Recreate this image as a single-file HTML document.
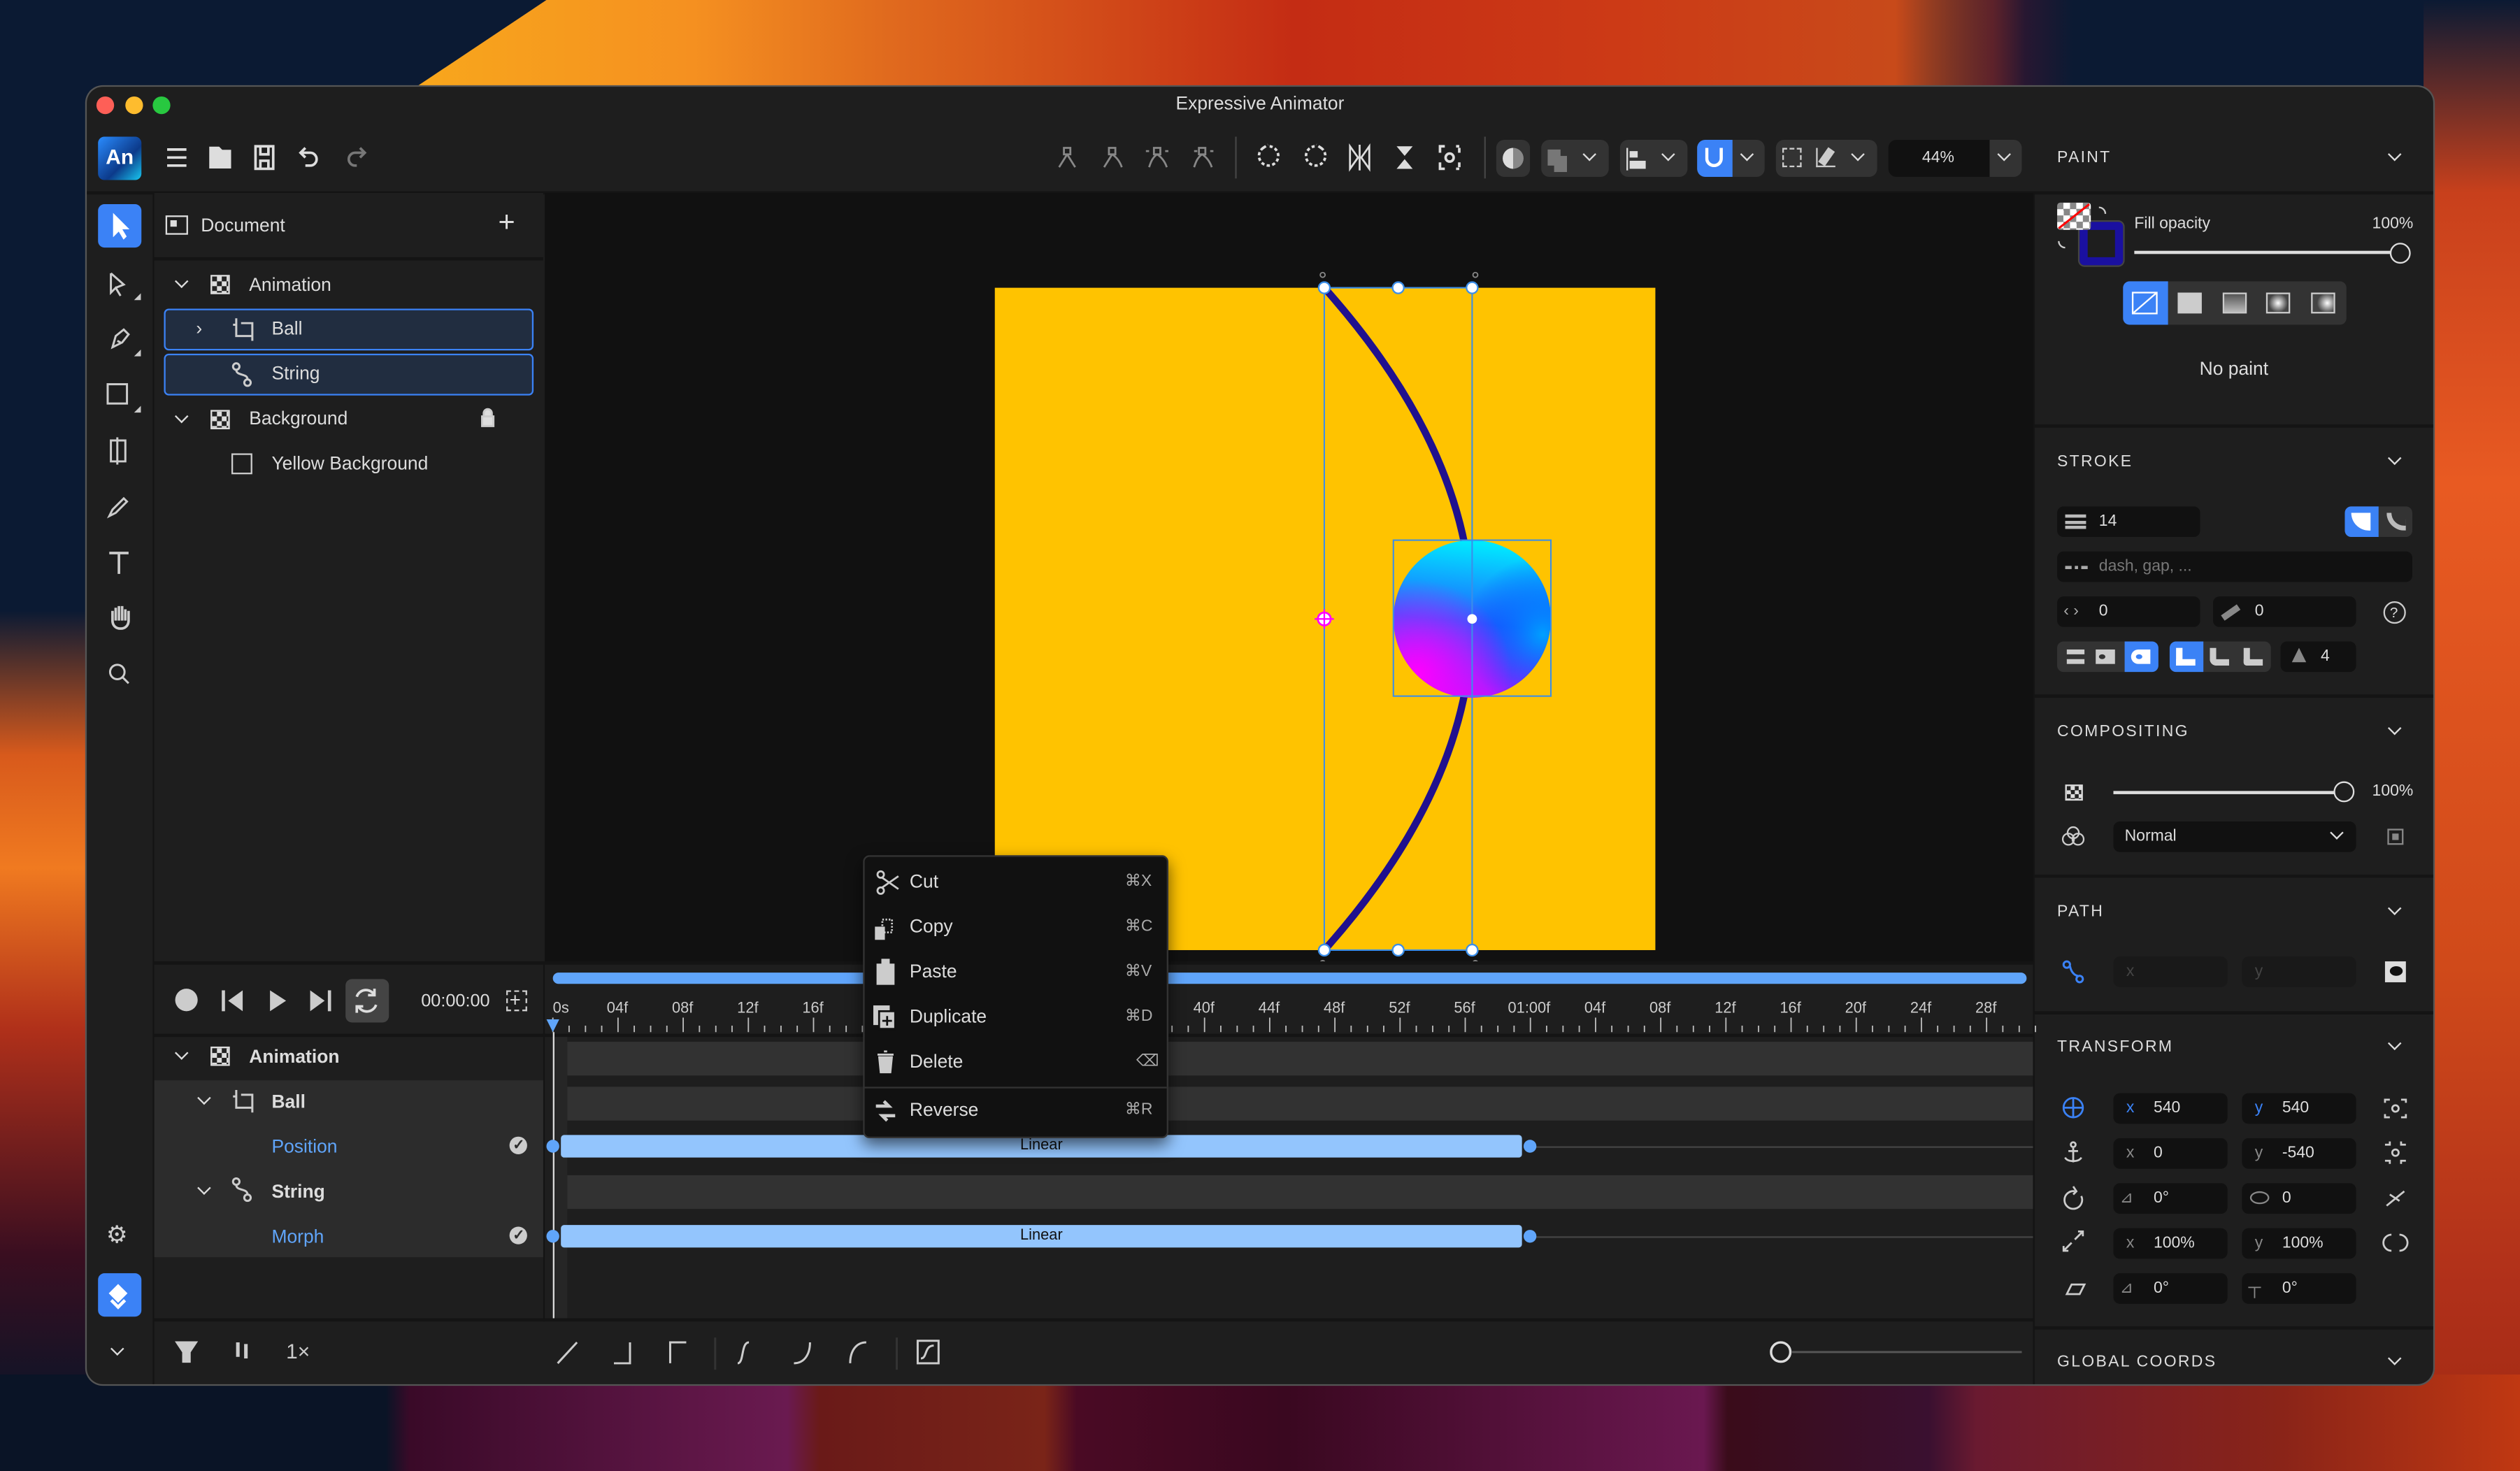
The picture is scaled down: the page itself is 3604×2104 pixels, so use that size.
<!DOCTYPE html>
<html><head><meta charset="utf-8"><style>
*{margin:0;padding:0;box-sizing:border-box}
html,body{width:3604px;height:2104px;overflow:hidden;background:#0b1a33}
#s{position:absolute;left:0;top:0;width:1568px;height:915px;transform:scale(2.29847,2.29945);transform-origin:0 0;font-family:"Liberation Sans",sans-serif;color:#ddd;overflow:hidden}
.a{position:absolute}
.t{position:absolute;font-size:11.5px;white-space:nowrap;line-height:14px}
.h{position:absolute;font-size:10px;letter-spacing:1px;color:#ddd;white-space:nowrap}
.chev{position:absolute;width:7px;height:7px;border-right:1.6px solid #ddd;border-bottom:1.6px solid #ddd;transform:rotate(45deg)}
.inp{position:absolute;background:#111;border-radius:4px;height:19px}
.sep{position:absolute;height:2px;background:#141414}
svg{position:absolute;overflow:visible}
</style></head><body><div id="s">
<!-- wallpaper -->
<div class="a" style="left:0;top:0;width:1568px;height:915px;background:#0b1a33"></div>
<div class="a" style="left:0;top:0;width:1568px;height:60px;background:linear-gradient(90deg,#0b1a33 0,#0b1a33 1200px,#3a1530 1240px,#0b1a33 1290px,#0b1a33 1535px,#e05a30 1560px)"></div>
<div class="a" style="left:250px;top:0;width:1010px;height:60px;clip-path:polygon(90px 0,100% 0,100% 100%,0 100%);background:linear-gradient(90deg,#f8a81c 0%,#f59020 18%,#e06a1e 30%,#c42c14 55%,#cc3a16 75%,#c84a1a 92%,rgba(60,20,40,0) 100%)"></div>
<div class="a" style="left:0;top:0;width:60px;height:915px;background:linear-gradient(180deg,#0b1a33 0,#0b1a33 380px,#d85a1c 470px,#f07a20 540px,#b0301a 640px,#3a0e20 780px,#0a1528 880px)"></div>
<div class="a" style="left:1508px;top:0;width:60px;height:915px;background:linear-gradient(180deg,#0b1a33 0,#c8401c 120px,#e85a22 300px,#d04a1a 600px,#b0301a 800px,#a02a12 915px)"></div>
<div class="a" style="left:0;top:855px;width:1568px;height:60px;background:linear-gradient(90deg,#0a1426 0,#0a1426 240px,#3a0a28 255px,#6a1a50 490px,#6a1a18 510px,#7a2418 650px,#4a0a24 670px,#3a0820 800px,#6a1850 1060px,#3a0c1a 1075px,#3a1030 1200px,#6a1a30 1230px,#8a2418 1420px,#c03812 1568px)"></div>

<!-- window -->
<div class="a" style="left:54px;top:54px;width:1460px;height:807px;background:#1e1e1e;border-radius:10px;overflow:hidden;box-shadow:0 0 0 1px #555">
<div class="a" style="left:0;top:65px;width:1460px;height:2px;background:#141414"></div>
</div>
<div class="a" style="left:60px;top:60px;width:11px;height:11px;border-radius:50%;background:#fe5f57"></div>
<div class="a" style="left:78px;top:60px;width:11px;height:11px;border-radius:50%;background:#febc2e"></div>
<div class="a" style="left:95px;top:60px;width:11px;height:11px;border-radius:50%;background:#28c840"></div>
<div class="t" style="left:0;width:1568px;text-align:center;top:58px;font-size:11.5px;color:#ddd">Expressive Animator</div>

<!-- toolbar left -->
<div class="a" style="left:61px;top:85px;width:27px;height:27px;border-radius:4px;background:linear-gradient(135deg,#2a8cff,#0c3a8a 60%,#18c8f0)"></div>
<div class="t" style="left:61px;top:91px;width:27px;text-align:center;font-weight:bold;font-size:13px;color:#fff">An</div>
<svg style="left:0;top:0" width="1568" height="915" viewBox="0 0 1568 915" fill="none" stroke="#ddd" stroke-width="1.6">
<path d="M104 93h12M104 98h12M104 103h12"/>
<path d="M131 92h5l2 2h5v10h-12z" fill="#ddd"/>
<path d="M159 91h11v14h-11zM162 91v5h5v-5M162 105v-5h5v5"/>
<path d="M190 92l-3 3 3 3M187 95h6a4 4 0 0 1 0 8h-3"/>
<path d="M224 92l3 3-3 3M227 95h-6a4 4 0 0 0 0 8h1" stroke="#777"/>
<g stroke="#888" stroke-width="1.2">
<path d="M662 92h4v4h-4zM664 96l-5 8M664 96l5 8"/>
<path d="M690 92h4v4h-4zM692 96l-5 8M692 96c3 2 5 5 6 8"/>
<path d="M718 92h4v4h-4zM720 96c-3 2-4 5-5 8M720 96c3 2 5 5 6 8M715 94h-2M725 94h2"/>
<path d="M746 92h4v4h-4zM748 96c-3 2-4 5-5 8M748 96c3 2 5 5 6 8M745 94h-2M753 94h2"/>
</g>
<path d="M769 85v26M924 85v26" stroke="#444" stroke-width="1"/>
<path d="M786 92a6 6 0 1 0 4 -1M786 92l3-2" stroke-dasharray="2 1.5"/>
<path d="M822 92a6 6 0 1 1 -4 -1M822 92l-3-2" stroke-dasharray="2 1.5"/>
<path d="M840 91v14l5-7zM852 91v14l-5-7zM846 90v16" stroke-width="1.2"/>
<path d="M869 91h10l-5 6zM869 105h10l-5-6z" fill="#ddd" stroke="none"/>
<path d="M896 92v-1h3M908 91h-2M896 104v1h3M908 105h-2M896 92v3M908 92v3M896 104v-3M908 104v-3"/>
<circle cx="902" cy="98" r="2.5"/>
</svg>
<div class="a" style="left:931px;top:87px;width:21px;height:23px;background:#333;border-radius:5px"></div>
<div class="a" style="left:935px;top:92px;width:13px;height:13px;border-radius:50%;background:linear-gradient(90deg,#ddd 50%,#888 50%)"></div>
<div class="a" style="left:959px;top:87px;width:42px;height:23px;background:#333;border-radius:5px"></div>
<div class="a" style="left:963px;top:93px;width:8px;height:10px;background:#777"></div><div class="a" style="left:967px;top:97px;width:8px;height:10px;background:#777"></div>
<div class="chev" style="left:986px;top:93px;width:6px;height:6px"></div>
<div class="a" style="left:1008px;top:87px;width:42px;height:23px;background:#333;border-radius:5px"></div>
<div class="a" style="left:1012px;top:92px;width:1px;height:14px;background:#ddd"></div><div class="a" style="left:1014px;top:94px;width:5px;height:4px;background:#ddd"></div><div class="a" style="left:1014px;top:100px;width:10px;height:5px;background:#ddd"></div>
<div class="chev" style="left:1035px;top:93px;width:6px;height:6px"></div>
<div class="a" style="left:1056px;top:87px;width:42px;height:23px;background:#333;border-radius:5px"></div>
<div class="a" style="left:1056px;top:87px;width:22px;height:23px;background:#3b82f6;border-radius:5px 0 0 5px"></div>
<div class="a" style="left:1061px;top:92px;width:11px;height:12px;border:2px solid #fff;border-top:none;border-radius:0 0 6px 6px"></div>
<div class="chev" style="left:1084px;top:93px;width:6px;height:6px"></div>
<div class="a" style="left:1105px;top:87px;width:63px;height:23px;background:#333;border-radius:5px"></div>
<div class="a" style="left:1109px;top:92px;width:12px;height:12px;border:1px dashed #ccc"></div>
<div class="a" style="left:1130px;top:92px;width:12px;height:12px;border-left:1px solid #ccc;border-bottom:1px solid #ccc"></div>
<div class="a" style="left:1134px;top:92px;width:5px;height:11px;background:#ccc;transform:rotate(35deg)"></div>
<div class="chev" style="left:1153px;top:93px;width:6px;height:6px"></div>
<div class="a" style="left:1175px;top:87px;width:63px;height:23px;background:#111;border-radius:5px 0 0 5px"></div>
<div class="t" style="left:1175px;top:92px;width:62px;text-align:center;font-size:10px">44%</div>
<div class="a" style="left:1238px;top:87px;width:20px;height:23px;background:#333;border-radius:0 5px 5px 0"></div>
<div class="chev" style="left:1244px;top:93px;width:6px;height:6px"></div>

<!-- left tool strip -->
<div class="a" style="left:95px;top:120px;width:1px;height:741px;background:#141414"></div>
<div class="a" style="left:61px;top:127px;width:27px;height:27px;background:#3b82f6;border-radius:4px"></div>
<svg style="left:0;top:0" width="1568" height="915" viewBox="0 0 1568 915" fill="none" stroke="#ccc" stroke-width="1.3">
<path d="M71 134v12l3-3 3 5 1-1-3-5h4z" fill="#fff" stroke="#fff"/>
<path d="M69 170v12l3-3 3 5M72 179l5-2-8-7"/>
<path d="M70 216l2-7 5-4 3 3-4 5-6 3zM73 212l2 1"/>
<rect x="67" y="239" width="12" height="12"/>
<path d="M69 274h9v13h-9zM73 272v17"/>
<path d="M68 321l2-4 7-7 2 2-7 7z"/>
<path d="M68 344h12M74 344v13" stroke-width="1.6"/>
<path d="M70 380v6c0 3 2 5 5 5s5-2 5-5v-6M72 386v-8M74 386v-9M76 386v-9M78 386v-7" stroke-width="1.6"/>
<circle cx="73" cy="418" r="4.5"/><path d="M76 421l4 4"/>
<path d="M85 186l2-2v2zM85 221l2-2v2zM85 256l2-2v2z" fill="#ccc"/>
</svg>
<div class="t" style="left:66px;top:762px;font-size:15px;color:#ccc">⚙</div>
<div class="a" style="left:61px;top:792px;width:27px;height:27px;background:#3b82f6;border-radius:4px"></div>
<div class="a" style="left:68px;top:799px;width:11px;height:11px;background:#fff;transform:rotate(45deg) scale(.75)"></div>
<div class="a" style="left:70px;top:806px;width:7px;height:7px;border-right:2px solid #fff;border-bottom:2px solid #fff;transform:rotate(45deg)"></div>
<div class="chev" style="left:70px;top:836px;width:6px;height:6px"></div>

<!-- layers panel -->
<div class="a" style="left:96px;top:120px;width:242px;height:478px;background:#1e1e1e"></div>
<div class="a" style="left:96px;top:160px;width:242px;height:2px;background:#141414"></div>
<div class="a" style="left:103px;top:134px;width:14px;height:12px;border:1.5px solid #ddd"></div>
<div class="a" style="left:106px;top:137px;width:4px;height:4px;background:#ddd"></div>
<div class="t" style="left:125px;top:134px">Document</div>
<div class="t" style="left:310px;top:131px;font-size:18px;color:#ddd">+</div>
<div class="chev" style="left:110px;top:172px;width:6px;height:6px"></div>
<div class="a" style="left:131px;top:171px;width:12px;height:12px;background:repeating-conic-gradient(#ddd 0 25%,#222 0 50%) 0 0/6px 6px;border:1px solid #ddd"></div>
<div class="t" style="left:155px;top:171px">Animation</div>
<div class="a" style="left:102px;top:192px;width:230px;height:26px;background:#212d40;border:1.3px solid #3b82f6;border-radius:3px"></div>
<div class="a" style="left:102px;top:220px;width:230px;height:26px;background:#212d40;border:1.3px solid #3b82f6;border-radius:3px"></div>
<div class="t" style="left:122px;top:198px">›</div>
<div class="t" style="left:169px;top:198px">Ball</div>
<div class="t" style="left:169px;top:226px">String</div>
<div class="chev" style="left:110px;top:256px;width:6px;height:6px"></div>
<div class="a" style="left:131px;top:255px;width:12px;height:12px;background:repeating-conic-gradient(#ddd 0 25%,#222 0 50%) 0 0/6px 6px;border:1px solid #ddd"></div>
<div class="t" style="left:155px;top:254px">Background</div>
<div class="a" style="left:144px;top:282px;width:13px;height:13px;border:1.3px solid #ccc"></div>
<div class="t" style="left:169px;top:282px">Yellow Background</div>

<!-- canvas -->
<div class="a" style="left:339px;top:120px;width:926px;height:478px;background:#111"></div>
<div class="a" style="left:619px;top:179px;width:411px;height:412px;background:#ffc300"></div>
<svg style="left:0;top:0" width="1568" height="915" viewBox="0 0 1568 915">
<defs>
<linearGradient id="g1" x1="0.3" y1="0" x2="0.2" y2="1"><stop offset="0" stop-color="#00e8ff"/><stop offset="0.5" stop-color="#2060ff"/><stop offset="1" stop-color="#c010ff"/></linearGradient>
<radialGradient id="g2" cx="0.15" cy="0.85" r="0.6"><stop offset="0" stop-color="#ff00ff"/><stop offset="1" stop-color="#ff00ff" stop-opacity="0"/></radialGradient>
<radialGradient id="g3" cx="0.95" cy="0.6" r="0.5"><stop offset="0" stop-color="#00a0ff"/><stop offset="1" stop-color="#0030ff" stop-opacity="0"/></radialGradient>
</defs>
<path d="M824 179Q1008 385 824 591" fill="none" stroke="#20108e" stroke-width="4.5"/>
<circle cx="916" cy="385" r="49" fill="url(#g1)"/>
<circle cx="916" cy="385" r="49" fill="url(#g3)"/>
<circle cx="916" cy="385" r="49" fill="url(#g2)"/>
<g fill="none" stroke="#3b8ee8" stroke-width="0.9">
<rect x="824" y="179" width="92" height="412"/>
<rect x="867" y="336" width="98" height="97"/>
</g>
<g fill="#fff" stroke="#3b8ee8" stroke-width="1">
<circle cx="824" cy="179" r="3.5"/><circle cx="870" cy="179" r="3.5"/><circle cx="916" cy="179" r="3.5"/>
<circle cx="824" cy="591" r="3.5"/><circle cx="870" cy="591" r="3.5"/><circle cx="916" cy="591" r="3.5"/>
</g>
<circle cx="916" cy="385" r="3" fill="#fff"/>
<circle cx="824" cy="385" r="4" fill="#fff" stroke="#f0f" stroke-width="1.2"/>
<path d="M818 385h12M824 379v12" stroke="#f0f" stroke-width="1"/>
<g fill="none" stroke="#888" stroke-width="0.8"><circle cx="823" cy="171" r="1.5"/><circle cx="918" cy="171" r="1.5"/><circle cx="823" cy="599" r="1.5"/><circle cx="918" cy="599" r="1.5"/></g>
</svg>

<!-- timeline area -->
<div class="a" style="left:96px;top:598px;width:1169px;height:224px;background:#1e1e1e"></div>
<div class="a" style="left:96px;top:598px;width:1169px;height:2px;background:#141414"></div>
<div class="a" style="left:96px;top:643px;width:1169px;height:2px;background:#141414"></div>
<div class="a" style="left:338px;top:598px;width:1px;height:224px;background:#141414"></div>
<div class="a" style="left:109px;top:615px;width:14px;height:14px;border-radius:50%;background:#ccc"></div>
<svg style="left:0;top:0" width="1568" height="915" viewBox="0 0 1568 915" fill="#ccc">
<path d="M138 616h2v13h-2zM151 616v13l-9-6.5z"/>
<path d="M168 616v13l10-6.5z"/>
<path d="M193 616v13l9-6.5zM204 616h2v13h-2z"/>
</svg>
<div class="a" style="left:215px;top:609px;width:27px;height:27px;background:#444;border-radius:4px"></div>
<svg style="left:0;top:0" width="1568" height="915" viewBox="0 0 1568 915" fill="none" stroke="#ddd" stroke-width="1.6">
<path d="M222 620a6 6 0 0 1 11 -1M234 625a6 6 0 0 1 -11 1M233 615v4h-4M222 630v-4h4"/>
</svg>
<div class="t" style="left:262px;top:616px;font-size:11px">00:00:00</div>
<div class="a" style="left:315px;top:616px;width:13px;height:13px;border:1px dashed #ccc"></div>
<div class="t" style="left:317px;top:615px;font-size:12px">+</div>
<div class="a" style="left:344px;top:605px;width:917px;height:7px;background:#60a5fa;border-radius:4px"></div>
<svg style="left:0;top:0" width="1568" height="915" viewBox="0 0 1568 915">
<g stroke="#bbb" stroke-width="0.8" id="ticks"></g>
</svg>
<div id="ruler"></div>
<div class="a" style="left:340px;top:634px;width:8px;height:8px;background:#60a5fa;clip-path:polygon(0 0,100% 0,50% 100%)"></div>
<div class="a" style="left:344px;top:642px;width:1px;height:178px;background:#ddd"></div>
<div class="a" style="left:345px;top:645px;width:8px;height:175px;background:#262626"></div>
<div class="a" style="left:96px;top:672px;width:242px;height:110px;background:#2c2c2c"></div>
<div class="chev" style="left:110px;top:652px;width:6px;height:6px"></div>
<div class="a" style="left:131px;top:651px;width:12px;height:12px;background:repeating-conic-gradient(#ddd 0 25%,#222 0 50%) 0 0/6px 6px;border:1px solid #ddd"></div>
<div class="t" style="left:155px;top:651px;font-weight:bold">Animation</div>
<div class="chev" style="left:124px;top:680px;width:6px;height:6px"></div>
<div class="t" style="left:169px;top:679px;font-weight:bold">Ball</div>
<div class="t" style="left:169px;top:707px;color:#60a5fa">Position</div>
<div class="chev" style="left:124px;top:736px;width:6px;height:6px"></div>
<div class="t" style="left:169px;top:735px;font-weight:bold">String</div>
<div class="t" style="left:169px;top:763px;color:#60a5fa">Morph</div>
<div class="a" style="left:317px;top:707px;width:11px;height:11px;border-radius:50%;background:#ccc"></div>
<div class="t" style="left:319px;top:705px;font-size:9px;color:#2c2c2c;font-weight:bold">✓</div>
<div class="a" style="left:317px;top:763px;width:11px;height:11px;border-radius:50%;background:#ccc"></div>
<div class="t" style="left:319px;top:761px;font-size:9px;color:#2c2c2c;font-weight:bold">✓</div>
<!-- layer icons (on top of row backgrounds) -->
<svg style="left:0;top:0" width="1568" height="915" viewBox="0 0 1568 915" fill="none" stroke="#ccc" stroke-width="1.3">
<path d="M147 198v11h10M150 201h7v11M145 202h2"/>
<circle cx="147" cy="228" r="2"/><circle cx="154" cy="238" r="2"/><path d="M147 230c0 4 7 2 7 6"/>
<path d="M300 259h7v6h-7zM301 259v-2a2.5 2.5 0 0 1 5 0v2" fill="#ddd"/>
<path d="M147 678v11h10M150 681h7v11M145 682h2"/>
<circle cx="147" cy="735" r="2"/><circle cx="154" cy="745" r="2"/><path d="M147 737c0 4 7 2 7 6"/>
</svg>
<div class="a" style="left:353px;top:648px;width:912px;height:21px;background:#323232"></div>
<div class="a" style="left:353px;top:676px;width:912px;height:21px;background:#323232"></div>
<div class="a" style="left:353px;top:731px;width:912px;height:21px;background:#323232"></div>
<div class="a" style="left:952px;top:713px;width:313px;height:1px;background:#444"></div>
<div class="a" style="left:952px;top:769px;width:313px;height:1px;background:#444"></div>
<div class="a" style="left:349px;top:706px;width:598px;height:14px;background:#93c5fd;border-radius:2px"></div>
<div class="t" style="left:349px;top:706px;width:598px;text-align:center;color:#111;font-size:9.5px">Linear</div>
<div class="a" style="left:340px;top:709px;width:8px;height:8px;border-radius:50%;background:#60a5fa"></div>
<div class="a" style="left:948px;top:709px;width:8px;height:8px;border-radius:50%;background:#60a5fa"></div>
<div class="a" style="left:349px;top:762px;width:598px;height:14px;background:#93c5fd;border-radius:2px"></div>
<div class="t" style="left:349px;top:762px;width:598px;text-align:center;color:#111;font-size:9.5px">Linear</div>
<div class="a" style="left:340px;top:765px;width:8px;height:8px;border-radius:50%;background:#60a5fa"></div>
<div class="a" style="left:948px;top:765px;width:8px;height:8px;border-radius:50%;background:#60a5fa"></div>

<!-- bottom bar -->
<div class="a" style="left:96px;top:820px;width:1169px;height:2px;background:#141414"></div>
<svg style="left:0;top:0" width="1568" height="915" viewBox="0 0 1568 915" fill="none" stroke="#ccc" stroke-width="1.3">
<path d="M110 835h12l-4 6v6h-4v-6z" fill="#ccc"/>
<path d="M148 835v9M153 836v9" stroke-width="2.2"/>
<path d="M347 848l12-13M382 848h10v-13M417 848v-13h10M459 848c4 0 2-13 7-13M494 848c6 0 10-5 10-13M529 848c0-8 4-13 10-13"/>
<path d="M445 832v20M558 832v20" stroke="#333"/>
<rect x="571" y="834" width="13" height="14"/><path d="M573 845c4 0 2-8 8-8"/>
<path d="M1115 841h143" stroke="#555"/>
<circle cx="1108" cy="841" r="6" fill="#1e1e1e" stroke="#ddd" stroke-width="1.5"/>
</svg>
<div class="t" style="left:178px;top:834px;font-size:13px;color:#ccc">1×</div>

<!-- context menu -->
<div class="a" style="left:537px;top:532px;width:190px;height:176px;background:#111;border:1px solid #333;border-radius:4px;box-shadow:0 4px 10px rgba(0,0,0,.6)"></div>
<div class="a" style="left:538px;top:676px;width:188px;height:1px;background:#333"></div>
<div class="t" style="left:566px;top:542px">Cut</div><div class="t" style="left:700px;top:542px;font-size:10px;color:#aaa">⌘X</div>
<div class="t" style="left:566px;top:570px">Copy</div><div class="t" style="left:700px;top:570px;font-size:10px;color:#aaa">⌘C</div>
<div class="t" style="left:566px;top:598px">Paste</div><div class="t" style="left:700px;top:598px;font-size:10px;color:#aaa">⌘V</div>
<div class="t" style="left:566px;top:626px">Duplicate</div><div class="t" style="left:700px;top:626px;font-size:10px;color:#aaa">⌘D</div>
<div class="t" style="left:566px;top:654px">Delete</div><div class="t" style="left:707px;top:654px;font-size:10px;color:#aaa">⌫</div>
<div class="t" style="left:566px;top:684px">Reverse</div><div class="t" style="left:700px;top:684px;font-size:10px;color:#aaa">⌘R</div>
<svg style="left:0;top:0" width="1568" height="915" viewBox="0 0 1568 915" fill="none" stroke="#ccc" stroke-width="1.2">
<circle cx="548" cy="544" r="2"/><circle cx="548" cy="554" r="2"/><path d="M549 546l10 7M549 552l10-7"/>
<path d="M549 572h6v8h-6z" stroke-dasharray="1 1"/><rect x="545" y="577" width="5" height="7" fill="#ccc"/>
<rect x="546" y="600" width="10" height="12" fill="#ccc"/><rect x="549" y="597" width="4" height="4" fill="#ccc"/>
<rect x="544" y="626" width="9" height="11" fill="#ccc"/><rect x="547" y="629" width="10" height="11" fill="#ccc" stroke="#111"/><path d="M552 632v6M549 635h6" stroke="#111"/>
<path d="M546 656h10M547 657l1 10h6l1-10M550 654h2" fill="#ccc"/>
<path d="M545 688h8l-3-3M557 694h-8l3 3" stroke-width="2"/>
</svg>

<!-- right panel -->
<div class="a" style="left:1265px;top:120px;width:1px;height:741px;background:#141414"></div>
<div class="h" style="left:1280px;top:93px">PAINT</div><div class="chev" style="left:1487px;top:93px;width:6px;height:6px"></div>
<div class="a" style="left:1294px;top:138px;width:27px;height:27px;border:5px solid #1a10a0;border-radius:3px;box-shadow:0 0 0 1px #444"></div>
<div class="a" style="left:1280px;top:126px;width:21px;height:17px;background:repeating-conic-gradient(#fff 0 25%,#888 0 50%) 0 0/8px 8px;border-radius:2px"></div>
<svg style="left:0;top:0" width="1568" height="915" viewBox="0 0 1568 915" fill="none">
<path d="M1281 142l19-15" stroke="#f00" stroke-width="1.3"/>
<path d="M1306 129a4 4 0 0 1 4 4M1281 150a4 4 0 0 0 4 4" stroke="#ccc" stroke-width="1"/>
</svg>
<div class="t" style="left:1328px;top:133px;font-size:10px">Fill opacity</div>
<div class="t" style="left:1476px;top:133px;font-size:10px">100%</div>
<div class="a" style="left:1328px;top:156px;width:160px;height:2px;background:#ddd"></div>
<div class="a" style="left:1487px;top:151px;width:13px;height:13px;border:1.5px solid #ddd;border-radius:50%;background:#1e1e1e"></div>
<div class="a" style="left:1321px;top:175px;width:139px;height:27px;background:#333;border-radius:4px"></div>
<div class="a" style="left:1321px;top:175px;width:28px;height:27px;background:#3b82f6;border-radius:4px 0 0 4px"></div>
<svg style="left:0;top:0" width="1568" height="915" viewBox="0 0 1568 915" fill="none" stroke="#fff" stroke-width="1"><rect x="1327" y="182" width="15" height="13"/><path d="M1327 195l15-13"/></svg>
<div class="a" style="left:1355px;top:182px;width:15px;height:13px;background:#ccc"></div>
<div class="a" style="left:1383px;top:182px;width:15px;height:13px;background:linear-gradient(#555,#bbb);border:1px solid #ccc"></div>
<div class="a" style="left:1410px;top:182px;width:15px;height:13px;background:radial-gradient(circle,#fff,#444 70%);border:1px solid #ccc"></div>
<div class="a" style="left:1438px;top:182px;width:15px;height:13px;background:radial-gradient(circle at 70% 50%,#fff,#444 60%);border:1px solid #ccc"></div>
<div class="t" style="left:1266px;top:223px;width:248px;text-align:center">No paint</div>
<div class="sep" style="left:1266px;top:264px;width:248px"></div>

<div class="h" style="left:1280px;top:282px">STROKE</div><div class="chev" style="left:1487px;top:282px;width:6px;height:6px"></div>
<div class="inp" style="left:1280px;top:315px;width:89px"></div>
<div class="a" style="left:1285px;top:320px;width:13px;height:9px;border-top:2px solid #bbb;border-bottom:2px solid #bbb"></div><div class="a" style="left:1285px;top:324px;width:13px;height:2px;background:#bbb"></div>
<div class="t" style="left:1306px;top:318px;font-size:10px">14</div>
<div class="a" style="left:1459px;top:315px;width:42px;height:19px;background:#333;border-radius:4px"></div>
<div class="a" style="left:1459px;top:315px;width:21px;height:19px;background:#3b82f6;border-radius:4px 0 0 4px"></div>
<div class="a" style="left:1463px;top:319px;width:12px;height:11px;background:#fff;border-radius:0 0 0 11px"></div>
<div class="a" style="left:1485px;top:319px;width:12px;height:11px;border-left:3px solid #bbb;border-bottom:3px solid #bbb;border-radius:0 0 0 11px"></div>
<div class="inp" style="left:1280px;top:343px;width:221px"></div>
<div class="a" style="left:1285px;top:352px;width:4px;height:2px;background:#aaa"></div><div class="a" style="left:1291px;top:352px;width:2px;height:2px;background:#aaa"></div><div class="a" style="left:1295px;top:352px;width:4px;height:2px;background:#aaa"></div>
<div class="t" style="left:1306px;top:346px;font-size:10px;color:#777">dash, gap, ...</div>
<div class="inp" style="left:1280px;top:371px;width:89px"></div>
<div class="t" style="left:1284px;top:374px;font-size:10px;color:#aaa">‹ ›</div><div class="t" style="left:1306px;top:374px;font-size:10px">0</div>
<div class="inp" style="left:1377px;top:371px;width:89px"></div>
<div class="a" style="left:1382px;top:379px;width:12px;height:4px;background:#888;transform:rotate(-35deg)"></div><div class="t" style="left:1403px;top:374px;font-size:10px">0</div>
<div class="a" style="left:1483px;top:374px;width:14px;height:14px;border:1.3px solid #ccc;border-radius:50%"></div><div class="t" style="left:1487px;top:374px;font-size:9px">?</div>
<div class="a" style="left:1280px;top:399px;width:63px;height:19px;background:#333;border-radius:4px"></div>
<div class="a" style="left:1322px;top:399px;width:21px;height:19px;background:#3b82f6;border-radius:0 4px 4px 0"></div>
<div class="a" style="left:1286px;top:404px;width:11px;height:9px;border-top:3px solid #ccc;border-bottom:3px solid #ccc"></div>
<div class="a" style="left:1304px;top:404px;width:12px;height:9px;background:#ccc"></div><div class="a" style="left:1306px;top:407px;width:4px;height:3px;background:#333;border-radius:50%"></div>
<div class="a" style="left:1326px;top:404px;width:12px;height:9px;background:#fff;border-radius:5px 0 0 5px"></div><div class="a" style="left:1329px;top:407px;width:4px;height:3px;background:#3b82f6;border-radius:50%"></div>
<div class="a" style="left:1350px;top:399px;width:63px;height:19px;background:#333;border-radius:4px"></div>
<div class="a" style="left:1350px;top:399px;width:21px;height:19px;background:#3b82f6;border-radius:4px 0 0 4px"></div>
<div class="a" style="left:1354px;top:403px;width:12px;height:11px;border-left:4px solid #fff;border-bottom:4px solid #fff"></div>
<div class="a" style="left:1375px;top:403px;width:12px;height:11px;border-left:4px solid #ccc;border-bottom:4px solid #ccc;border-radius:0 0 0 4px"></div>
<div class="a" style="left:1396px;top:403px;width:12px;height:11px;border-left:4px solid #ccc;border-bottom:4px solid #ccc;border-radius:0 0 0 2px"></div>
<div class="inp" style="left:1419px;top:399px;width:47px"></div>
<div class="a" style="left:1426px;top:403px;width:9px;height:9px;background:#888;clip-path:polygon(50% 0,100% 100%,0 100%)"></div>
<div class="t" style="left:1444px;top:402px;font-size:10px">4</div>
<div class="sep" style="left:1266px;top:432px;width:248px"></div>

<div class="h" style="left:1280px;top:450px">COMPOSITING</div><div class="chev" style="left:1487px;top:450px;width:6px;height:6px"></div>
<div class="a" style="left:1285px;top:488px;width:11px;height:10px;background:repeating-conic-gradient(#ddd 0 25%,#222 0 50%) 0 0/5px 5px;border:1px solid #ddd"></div>
<div class="a" style="left:1315px;top:492px;width:138px;height:2px;background:#ddd"></div>
<div class="a" style="left:1452px;top:486px;width:13px;height:13px;border:1.5px solid #ddd;border-radius:50%;background:#1e1e1e"></div>
<div class="t" style="left:1476px;top:486px;font-size:10px">100%</div>
<svg style="left:0;top:0" width="1568" height="915" viewBox="0 0 1568 915" fill="none" stroke="#ccc" stroke-width="1"><circle cx="1290" cy="518" r="3.5"/><circle cx="1287" cy="522" r="3.5"/><circle cx="1293" cy="522" r="3.5"/><rect x="1486" y="516" width="9" height="9" stroke="#888"/><rect x="1489" y="519" width="3" height="3" fill="#888" stroke="#888"/></svg>
<div class="inp" style="left:1315px;top:511px;width:151px"></div>
<div class="t" style="left:1322px;top:514px;font-size:10px">Normal</div>
<div class="chev" style="left:1451px;top:515px;width:6px;height:6px"></div>
<div class="sep" style="left:1266px;top:544px;width:248px"></div>

<div class="h" style="left:1280px;top:562px">PATH</div><div class="chev" style="left:1487px;top:562px;width:6px;height:6px"></div>
<svg style="left:0;top:0" width="1568" height="915" viewBox="0 0 1568 915" fill="none" stroke="#3b82f6" stroke-width="1.3"><circle cx="1286" cy="600" r="2"/><circle cx="1294" cy="609" r="2"/><path d="M1288 601c1 5 4 6 5 6"/></svg>
<div class="inp" style="left:1315px;top:595px;width:71px;background:#191919"></div><div class="t" style="left:1323px;top:598px;font-size:10px;color:#444">x</div>
<div class="inp" style="left:1395px;top:595px;width:71px;background:#191919"></div><div class="t" style="left:1403px;top:598px;font-size:10px;color:#444">y</div>
<div class="a" style="left:1484px;top:598px;width:13px;height:13px;background:#ddd"></div><div class="a" style="left:1487px;top:601px;width:8px;height:6px;background:#111;border-radius:50%"></div>
<div class="sep" style="left:1266px;top:629px;width:248px"></div>

<div class="h" style="left:1280px;top:646px">TRANSFORM</div><div class="chev" style="left:1487px;top:646px;width:6px;height:6px"></div>
<div class="inp" style="left:1315px;top:680px;width:71px"></div><div class="t" style="left:1323px;top:683px;font-size:10px;color:#3b82f6">x</div><div class="t" style="left:1340px;top:683px;font-size:10px">540</div>
<div class="inp" style="left:1395px;top:680px;width:71px"></div><div class="t" style="left:1403px;top:683px;font-size:10px;color:#3b82f6">y</div><div class="t" style="left:1420px;top:683px;font-size:10px">540</div>
<div class="inp" style="left:1315px;top:708px;width:71px"></div><div class="t" style="left:1323px;top:711px;font-size:10px;color:#888">x</div><div class="t" style="left:1340px;top:711px;font-size:10px">0</div>
<div class="inp" style="left:1395px;top:708px;width:71px"></div><div class="t" style="left:1403px;top:711px;font-size:10px;color:#888">y</div><div class="t" style="left:1420px;top:711px;font-size:10px">-540</div>
<div class="inp" style="left:1315px;top:736px;width:71px"></div><div class="t" style="left:1319px;top:739px;font-size:10px;color:#888">⊿</div><div class="t" style="left:1340px;top:739px;font-size:10px">0°</div>
<div class="inp" style="left:1395px;top:736px;width:71px"></div><div class="a" style="left:1400px;top:741px;width:12px;height:8px;border:1px solid #888;border-radius:50%"></div><div class="t" style="left:1420px;top:739px;font-size:10px">0</div>
<div class="inp" style="left:1315px;top:764px;width:71px"></div><div class="t" style="left:1323px;top:767px;font-size:10px;color:#888">x</div><div class="t" style="left:1340px;top:767px;font-size:10px">100%</div>
<div class="inp" style="left:1395px;top:764px;width:71px"></div><div class="t" style="left:1403px;top:767px;font-size:10px;color:#888">y</div><div class="t" style="left:1420px;top:767px;font-size:10px">100%</div>
<div class="inp" style="left:1315px;top:792px;width:71px"></div><div class="t" style="left:1319px;top:795px;font-size:10px;color:#888">⊿</div><div class="t" style="left:1340px;top:795px;font-size:10px">0°</div>
<div class="inp" style="left:1395px;top:792px;width:71px"></div><div class="t" style="left:1399px;top:794px;font-size:11px;color:#888">┬</div><div class="t" style="left:1420px;top:795px;font-size:10px">0°</div>
<svg style="left:0;top:0" width="1568" height="915" viewBox="0 0 1568 915" fill="none" stroke="#ccc" stroke-width="1.2">
<circle cx="1290" cy="689" r="6" stroke="#3b82f6"/><path d="M1284 689h12M1290 683v12" stroke="#3b82f6"/>
<circle cx="1290" cy="712" r="1.5"/><path d="M1290 714v9M1285 720c1 3 9 3 10 0M1287 716h6"/>
<path d="M1295 744a5.5 5.5 0 1 1 -4 -3M1290 738l2 3-2 2"/>
<path d="M1284 778l5-5M1291 771l5-5M1284 775v3h3M1296 769v-3h-3"/>
<path d="M1286 805l3-6h8l-3 6z"/>
<path d="M1484 686v-2h3M1494 684h3v2M1484 693v2h3M1494 695h3v-2"/><circle cx="1490.5" cy="689.5" r="2"/>
<path d="M1484 712h3v-2M1494 710v2h3M1484 722h3v2M1494 724v-2h3"/><circle cx="1490.5" cy="717" r="2"/>
<path d="M1485 750l11-9M1487 743l6 4"/>
<path d="M1488 768a5 5 0 0 0 0 10M1493 768a5 5 0 0 1 0 10"/>
</svg>
<div class="sep" style="left:1266px;top:825px;width:248px"></div>
<div class="h" style="left:1280px;top:842px">GLOBAL COORDS</div><div class="chev" style="left:1487px;top:842px;width:6px;height:6px"></div>

<script>
(function(){
var labels=["0s","04f","08f","12f","16f","20f","24f","28f","32f","36f","40f","44f","48f","52f","56f","01:00f","04f","08f","12f","16f","20f","24f","28f"];
var s=document.getElementById('s'),g=document.getElementById('ticks');
for(var i=0;i<23;i++){var x=344+40.55*i;
 if(!(x>530&&x<728)){var d=document.createElement('div');d.className='t';d.style.left=(x-(i==0?0:(i==15?14:7)))+'px';d.style.top='621px';d.style.fontSize='9.5px';d.style.color='#ccc';d.textContent=labels[i];s.appendChild(d);}
 var l=document.createElementNS('http://www.w3.org/2000/svg','path');l.setAttribute('d','M'+x+' 633v9M'+(x+10.1)+' 638v4M'+(x+20.3)+' 638v4M'+(x+30.4)+' 638v4');g.appendChild(l);}
})();
</script>
</div></body></html>
